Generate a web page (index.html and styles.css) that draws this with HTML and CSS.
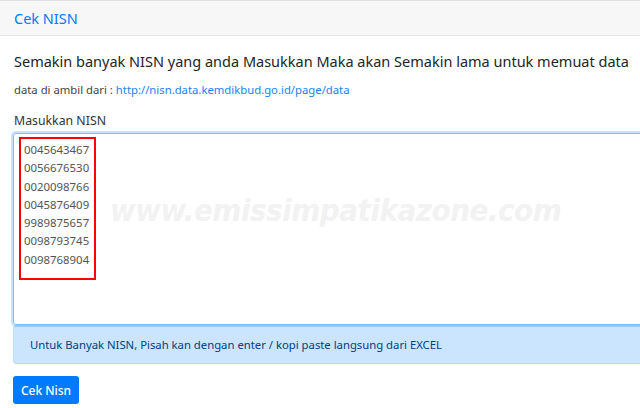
FILE: index.html
```html
<!DOCTYPE html>
<html>
<head>
<meta charset="utf-8">
<link rel="stylesheet" href="styles.css">
</head>
<body>
<div class="card">
  <div class="card-header">Cek NISN</div>
  <div class="card-body">
    <h5 class="title">Semakin banyak NISN yang anda Masukkan Maka akan Semakin lama untuk memuat data</h5>
    <p class="source">data di ambil dari : <a href="#">http://nisn.data.kemdikbud.go.id/page/data</a></p>
    <label class="label">Masukkan NISN</label>
    <div class="field">
      <div class="list">
        <span>0045643467</span>
        <span>0056676530</span>
        <span>0020098766</span>
        <span>0045876409</span>
        <span>9989875657</span>
        <span>0098793745</span>
        <span>0098768904</span>
      </div>
      <div class="watermark">www.emissimpatikazone.com</div>
    </div>
    <div class="alert">Untuk Banyak NISN, Pisah kan dengan enter / kopi paste langsung dari EXCEL</div>
    <div class="actions">
      <button class="btn">Cek Nisn</button>
      <div class="rule"></div>
    </div>
  </div>
</div>
</body>
</html>
```
FILE: styles.css
```css
* { box-sizing: border-box; }
body {
  margin: 0;
  font-family: "Noto Sans", "Open Sans", sans-serif;
  color: #212529;
  background: #fff;
  overflow: hidden;
}
.card {
  border-top: 1px solid #e2e2e2;
}
.card-header {
  height: 35px;
  background: #f7f7f7;
  border-bottom: 1px solid #e4e4e4;
  color: #007bff;
  font-size: 14.5px;
  padding: 7px 0 0 14px;
}
.card-body {
  padding: 0 0 0 13px;
}
.title {
  margin: 15px 0 0 1px;
  font-size: 14.5px;
  font-weight: 400;
  white-space: nowrap;
}
.source {
  margin: 11px 0 0 1px;
  font-size: 11.3px;
  color: #444;
}
.source a { color: #1a82f7; text-decoration: none; }
.label {
  display: block;
  margin: 15px 0 0 1px;
  font-size: 12.3px;
  color: #333;
}
.field {
  position: relative;
  margin-top: 4px;
  height: 192px;
  margin-right: -10px;
  border: 1px solid #80bdff;
  border-radius: 3px;
  box-shadow: 0 0 0 2px rgba(0, 123, 255, 0.22);
  padding: 3px 0 0 5px;
}
.list {
  display: flex;
  flex-direction: column;
  width: 77px;
  height: 143px;
  border: 2px solid #ff0000;
  padding: 2px 0 0 3px;
  font-size: 11.4px;
  line-height: 18.3px;
  color: #555;
}
.watermark {
  position: absolute;
  left: 96px;
  top: 58px;
  font-size: 31px;
  font-weight: 700;
  font-style: italic;
  font-stretch: condensed;
  color: #f2f2f2;
  letter-spacing: -0.5px;
  font-family: "DejaVu Sans", sans-serif;
}
.alert {
  margin-top: 0;
  margin-right: -10px;
  height: 39px;
  background: #cce5ff;
  border: 1px solid #b8daff;
  border-radius: 3px;
  color: #004085;
  font-size: 11.3px;
  padding: 11px 0 0 16px;
}
.actions {
  display: flex;
  align-items: flex-end;
  margin-top: 12px;
}
.btn {
  width: 66px;
  height: 28px;
  background: #007bff;
  border: 0;
  border-radius: 3px;
  color: #fff;
  font-family: inherit;
  font-size: 12px;
  font-weight: 500;
  padding: 0;
}
.rule {
  flex: 1;
  height: 4px;
  background: #d4d4d4;
  margin-bottom: -5px;
}
```
